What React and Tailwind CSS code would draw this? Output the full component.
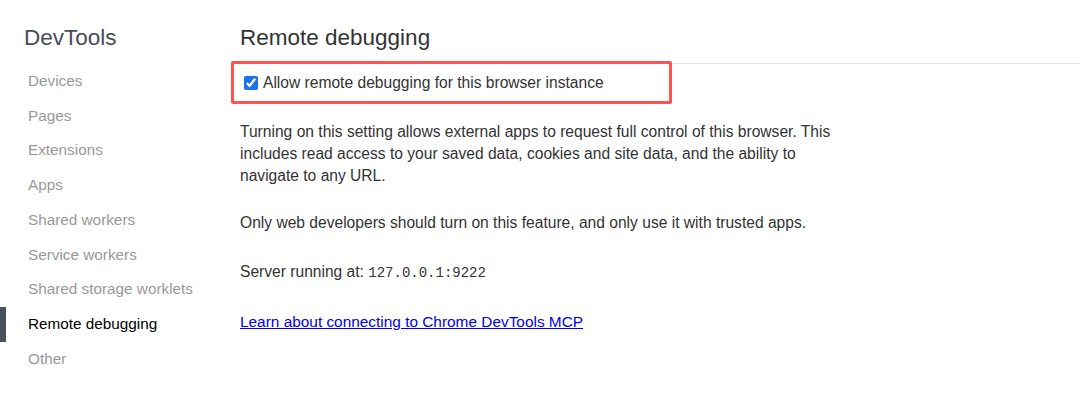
import React from 'react';

export default function App() {
  const navItems = [
    "Devices",
    "Pages",
    "Extensions",
    "Apps",
    "Shared workers",
    "Service workers",
    "Shared storage worklets",
    "Remote debugging",
    "Other"
  ];
  const active = "Remote debugging";

  return (
    <div className="flex h-[403px] w-[1080px] bg-white text-[#333] font-['Liberation_Sans',sans-serif] overflow-hidden">
      <div className="w-[240px] shrink-0 pt-[24px]">
        <h1 className="pl-[24px] text-[22.5px] leading-[28px] text-[#474d57] mb-[12px]">DevTools</h1>
        <ul>
          {navItems.map((item) => (
            <li
              key={item}
              className={
                "flex h-[34.75px] items-center text-[15.3px] border-l-[6px] pl-[22px] " +
                (item === active ? "border-[#48515c] text-black" : "border-transparent text-[#999]")
              }
            >
              {item}
            </li>
          ))}
        </ul>
      </div>

      <div className="flex-1 pt-[24px]">
        <h2 className="text-[22.5px] leading-[28px] text-[#333] pb-[11px] border-b border-[#e8e8e8]">Remote debugging</h2>
        <div className="-mt-[3px] -ml-[9px] w-[441px] h-[43px] border-[3px] border-[#ff5252] rounded-[2px] flex items-center pl-[10px] gap-[5px]">
          <input type="checkbox" defaultChecked className="w-[14px] h-[14px] accent-[#1a73e8] m-0" />
          <span className="text-[15.6px] mt-[1px]">Allow remote debugging for this browser instance</span>
        </div>

        <p className="mt-[17px] w-[596px] text-[15.6px] leading-[22px]">
          Turning on this setting allows external apps to request full control of this browser. This
          includes read access to your saved data, cookies and site data, and the ability to
          navigate to any URL.
        </p>
        <p className="mt-[25px] text-[15.6px] leading-[22px]">
          Only web developers should turn on this feature, and only use it with trusted apps.
        </p>
        <p className="mt-[27px] text-[15.6px] leading-[22px]">
          Server running at: <span className="font-['Liberation_Mono',monospace] text-[14px]">127.0.0.1:9222</span>
        </p>
        <p className="mt-[27px] text-[15.4px] leading-[22px]">
          <a href="#" className="text-[#0000ee] underline">Learn about connecting to Chrome DevTools MCP</a>
        </p>
      </div>
    </div>
  );
}
